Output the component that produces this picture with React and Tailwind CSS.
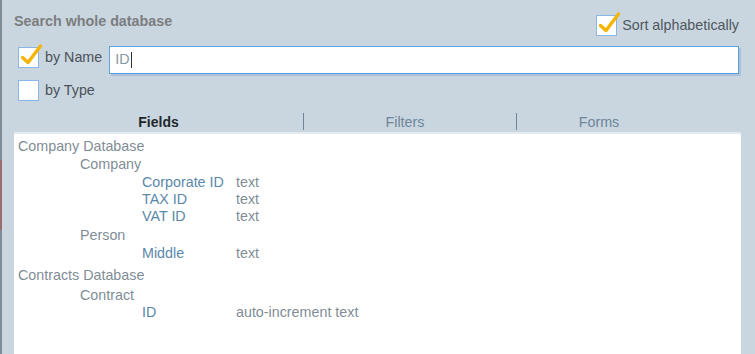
import { useState } from 'react';

function CheckBox({ checked }) {
  return (
    <div className="relative w-[21px] h-[21px] bg-white border border-[#86b6ea] shrink-0">
      {checked && (
        <svg className="absolute left-[1px] top-[-4px] overflow-visible" width="24" height="24" viewBox="0 0 24 24">
          <path d="M2.5 13.5 L8 18.5 L20.5 2" fill="none" stroke="#f4b400" strokeWidth="3.4" strokeLinecap="round" strokeLinejoin="round" />
        </svg>
      )}
    </div>
  );
}

const rows = [
  { level: 0, label: 'Company Database', mt: 'mt-0' },
  { level: 1, label: 'Company', mt: 'mt-px' },
  { level: 2, label: 'Corporate ID', type: 'text', mt: 'mt-px' },
  { level: 2, label: 'TAX ID', type: 'text', mt: 'mt-0' },
  { level: 2, label: 'VAT ID', type: 'text', mt: 'mt-0' },
  { level: 1, label: 'Person', mt: 'mt-[2px]' },
  { level: 2, label: 'Middle', type: 'text', mt: 'mt-px' },
  { level: 0, label: 'Contracts Database', mt: 'mt-[5px]' },
  { level: 1, label: 'Contract', mt: 'mt-[3px]' },
  { level: 2, label: 'ID', type: 'auto-increment text', mt: 'mt-0' },
];

function TreeRow({ row }) {
  if (row.level === 0) {
    return <div className={`h-[17px] leading-[17px] pl-[4px] text-[#7f8d96] ${row.mt}`}>{row.label}</div>;
  }
  if (row.level === 1) {
    return <div className={`h-[17px] leading-[17px] pl-[66px] text-[#7f8d96] ${row.mt}`}>{row.label}</div>;
  }
  return (
    <div className={`h-[17px] leading-[17px] pl-[128px] flex ${row.mt}`}>
      <span className="w-[94px] text-[#5b88a9]">{row.label}</span>
      <span className="text-[#7f8d96]">{row.type}</span>
    </div>
  );
}

export default function App() {
  const [query] = useState('ID');

  return (
    <div className="w-[755px] h-[354px] overflow-hidden flex bg-[#c9d6e0] font-['Liberation_Sans',Arial,sans-serif] text-[14.3px]">
      <div className="w-[2px] h-full flex flex-col bg-[#7f8c96]">
        <div className="h-[160px]" />
        <div className="h-[70px] bg-[#9a6c6c]" />
      </div>

      <div className="flex-1 flex flex-col pl-[12px] pr-[16px] pt-[12px]">
        <div className="flex justify-between h-[24px]">
          <div className="mt-[1px] leading-[17px] text-[14.3px] font-bold text-[#7b7d7f]">Search whole database</div>
          <div className="flex items-start mt-[3px]">
            <CheckBox checked />
            <span className="ml-[5px] leading-[21px] text-[#4f565c]">Sort alphabetically</span>
          </div>
        </div>

        <div className="flex items-start mt-[10px]">
          <div className="ml-[4px] mt-px flex items-center">
            <CheckBox checked />
            <span className="ml-[6px] text-[#4b5157]">by Name</span>
          </div>
          <div className="ml-[7px] flex-1 h-[28px] bg-white border border-[#5f9fe2] shadow-[2px_2px_0_#a9c2da] flex items-center pl-[5px]">
            <span className="text-[#8897a2]">{query}</span>
            <span className="w-px h-[16px] bg-[#333] ml-px" />
          </div>
        </div>

        <div className="flex items-center mt-[6px] ml-[4px]">
          <CheckBox />
          <span className="ml-[6px] text-[#4b5157]">by Type</span>
        </div>

        <div className="flex mt-[12px] h-[19px] mr-[-2px] leading-[19px]">
          <div className="w-[289px] text-center font-bold text-[14px] text-[#23272b]">Fields</div>
          <div className="w-px h-[17px] bg-[#6c8598]" />
          <div className="w-[202px] text-center text-[#6f8598]">Filters</div>
          <div className="w-[10px]" />
          <div className="w-px h-[17px] bg-[#6c8598]" />
          <div className="w-[164px] text-center text-[#6f8598]">Forms</div>
        </div>

        <div className="flex-1 mr-[-2px] bg-white border-t-2 border-[#e3ebf0] pt-[4px]">
          {rows.map((row, i) => (
            <TreeRow key={i} row={row} />
          ))}
        </div>
      </div>
    </div>
  );
}
